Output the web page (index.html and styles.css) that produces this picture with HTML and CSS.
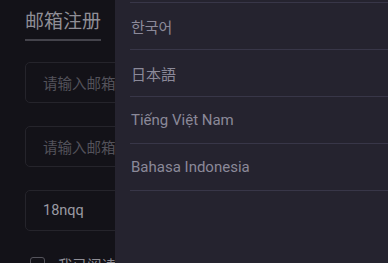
FILE: index.html
```html
<!DOCTYPE html>
<html lang="zh">
<head>
<meta charset="utf-8">
<link rel="stylesheet" href="styles.css">
</head>
<body>
<div class="page">
  <div class="tabs">
    <div class="tab active">邮箱注册</div>
  </div>
  <div class="form">
    <div class="field placeholder">请输入邮箱地址</div>
    <div class="field placeholder">请输入邮箱验证码</div>
    <div class="field value">18nqq</div>
    <label class="agree"><span class="box"></span><span class="agree-text">我已阅读并同意用户协议</span></label>
  </div>
</div>
<div class="drawer">
  <ul class="langs">
    <li>한국어</li>
    <li>日本語</li>
    <li>Tiếng Việt Nam</li>
    <li>Bahasa Indonesia</li>
  </ul>
</div>
</body>
</html>
```
FILE: styles.css
```css
html, body {
  margin: 0;
  padding: 0;
  width: 388px;
  height: 263px;
  overflow: hidden;
  background: #131218;
  font-family: Roboto, "Noto Sans CJK SC", sans-serif;
}
.page {
  padding: 0 25px;
}
.tabs {
  display: flex;
  padding-top: 9px;
}
.tab {
  font-size: 19px;
  line-height: 26px;
  color: #8f8e96;
  padding-bottom: 4px;
  border-bottom: 2px solid #44434b;
}
.form {
  display: flex;
  flex-direction: column;
  gap: 23px;
  padding-top: 21px;
}
.field {
  height: 39px;
  border: 1px solid #25242b;
  border-radius: 5px;
  padding-left: 17px;
  display: flex;
  align-items: center;
  font-size: 14.5px;
  white-space: nowrap;
  overflow: hidden;
}
.placeholder { color: #53525b; }
.value { color: #9a99a2; }
.agree {
  display: flex;
  align-items: center;
  gap: 13px;
  padding-left: 5px;
  font-size: 14.5px;
  color: #8f8e96;
}
.box {
  width: 13px;
  height: 13px;
  border: 1.5px solid #55545c;
  border-radius: 3px;
}
.drawer {
  position: absolute;
  top: 0;
  left: 115px;
  right: 0;
  bottom: 0;
  background: #25232f;
  padding-top: 2px;
}
.langs {
  list-style: none;
  margin: 0;
  padding: 0 0 0 15px;
}
.langs li {
  border-top: 1px solid #383648;
  height: 46px;
  display: flex;
  align-items: center;
  padding-left: 1px;
  font-size: 15px;
  color: #8b8999;
}
.langs li:last-child {
  border-bottom: 1px solid #383648;
}
```
